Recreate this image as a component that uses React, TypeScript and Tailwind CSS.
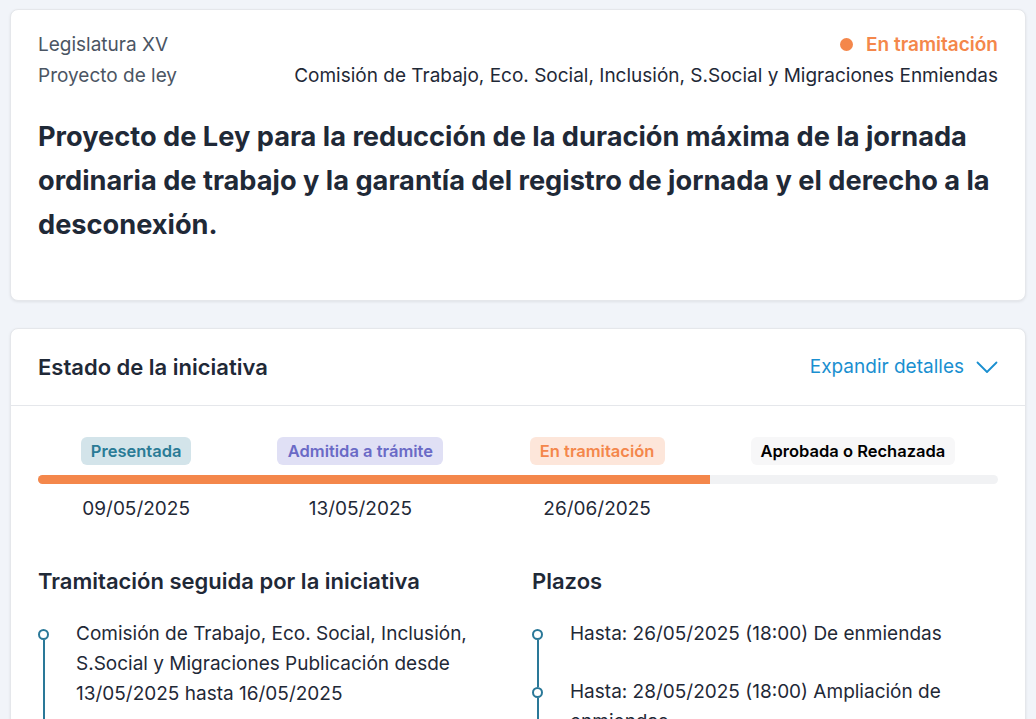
import type { JSX } from 'react';

const badges = [
  { label: 'Presentada', cls: 'bg-[#d3e4ea] text-[#2a7b96] w-[110px]', date: '09/05/2025' },
  { label: 'Admitida a trámite', cls: 'bg-[#e0e0f5] text-[#6a6ac6] w-[166px]', date: '13/05/2025' },
  { label: 'En tramitación', cls: 'bg-[#fde6da] text-[#f4874b] w-[135px]', date: '26/06/2025' },
  { label: 'Aprobada o Rechazada', cls: 'bg-[#f7f7f8] text-black w-[204px]', date: '' },
];

const widths = ['w-[110px]', 'w-[166px]', 'w-[135px]', 'w-[204px]'];

const TimelineItem = ({ text, last }: { text: string; last?: boolean }): JSX.Element => (
  <li className="flex gap-[27px]">
    <div className="flex flex-col items-center w-[11px] shrink-0 pt-[10px]">
      <span className="w-[11px] h-[11px] rounded-full border-2 border-[#2a7898] bg-white" />
      <span className={`w-[2px] flex-1 bg-[#2a7898] ${last ? '' : '-mb-[38px]'}`} />
    </div>
    <p className="text-[19px] leading-[30px] text-[#1f2937]">{text}</p>
  </li>
);

export default function App(): JSX.Element {
  return (
    <div
      className="min-h-screen bg-[#f1f4f9] px-[10px] pt-[9px] pb-6 flex flex-col gap-[27px]"
      style={{ fontFamily: 'Inter, "Noto Sans", sans-serif' }}
    >
      <section className="bg-white rounded-lg border border-[#e5e7eb] shadow-[0_1px_3px_rgba(0,0,0,0.08)] px-[27px] pt-[19px] pb-[53px]">
        <div className="flex justify-between text-[19px] leading-[31px]">
          <div className="text-[#4b5563]">
            <p>Legislatura XV</p>
            <p>Proyecto de ley</p>
          </div>
          <div className="flex flex-col items-end">
            <p className="flex items-center gap-[13px] font-semibold text-[#f4874b]">
              <span className="w-[13px] h-[13px] rounded-full bg-[#f4874b]" />
              En tramitación
            </p>
            <p className="text-[#1f2937]">
              Comisión de Trabajo, Eco. Social, Inclusión, S.Social y Migraciones Enmiendas
            </p>
          </div>
        </div>
        <h1 className="mt-[24px] text-[27.2px] leading-[44px] font-bold text-[#1f2937]">
          Proyecto de Ley para la reducción de la duración máxima de la jornada ordinaria de trabajo y la
          garantía del registro de jornada y el derecho a la desconexión.
        </h1>
      </section>

      <section className="bg-white rounded-lg border border-[#e5e7eb] shadow-[0_1px_3px_rgba(0,0,0,0.08)]">
        <div className="h-[77px] px-[27px] flex items-center justify-between border-b border-[#e5e7eb]">
          <h2 className="text-[22px] font-semibold text-[#1f2937]">Estado de la iniciativa</h2>
          <button className="flex items-center gap-[12px] text-[19px] text-[#1a8fd0]">
            Expandir detalles
            <svg width="22" height="13" viewBox="0 0 22 13" fill="none">
              <path d="M1.5 1.5L11 11L20.5 1.5" stroke="currentColor" strokeWidth="1.8" strokeLinecap="round" strokeLinejoin="round" />
            </svg>
          </button>
        </div>

        <div className="px-[27px] pt-[31px]">
          <div className="flex justify-around">
            {badges.map((b) => (
              <span
                key={b.label}
                className={`h-[28px] rounded-md flex items-center justify-center text-[16.5px] font-semibold ${b.cls}`}
              >
                {b.label}
              </span>
            ))}
          </div>
          <div className="mt-[10px] h-[9px] rounded-full bg-[#f1f2f4] overflow-hidden">
            <div className="h-full w-[70%] bg-[#f4874b]" />
          </div>
          <div className="mt-[11px] flex justify-around">
            {badges.map((b, i) => (
              <span key={b.label} className={`${widths[i]} text-center text-[19px] leading-[28px] text-[#1f2937]`}>
                {b.date}
              </span>
            ))}
          </div>

          <div className="mt-[44px] grid grid-cols-2 gap-[28px]">
            <div>
              <h3 className="text-[22px] leading-[28px] font-semibold text-[#1f2937]">
                Tramitación seguida por la iniciativa
              </h3>
              <ul className="mt-[24px] flex flex-col gap-[28px]">
                <TimelineItem text="Comisión de Trabajo, Eco. Social, Inclusión, S.Social y Migraciones Publicación desde 13/05/2025 hasta 16/05/2025" />
                <TimelineItem text="Comisión de Trabajo, Eco. Social, Inclusión, S.Social y Migraciones Enmiendas" last />
              </ul>
            </div>
            <div>
              <h3 className="text-[22px] leading-[28px] font-semibold text-[#1f2937]">Plazos</h3>
              <ul className="mt-[24px] flex flex-col gap-[28px]">
                <TimelineItem text="Hasta: 26/05/2025 (18:00) De enmiendas" />
                <TimelineItem text="Hasta: 28/05/2025 (18:00) Ampliación de enmiendas" last />
              </ul>
            </div>
          </div>
        </div>
        <div className="h-10" />
      </section>
    </div>
  );
}
